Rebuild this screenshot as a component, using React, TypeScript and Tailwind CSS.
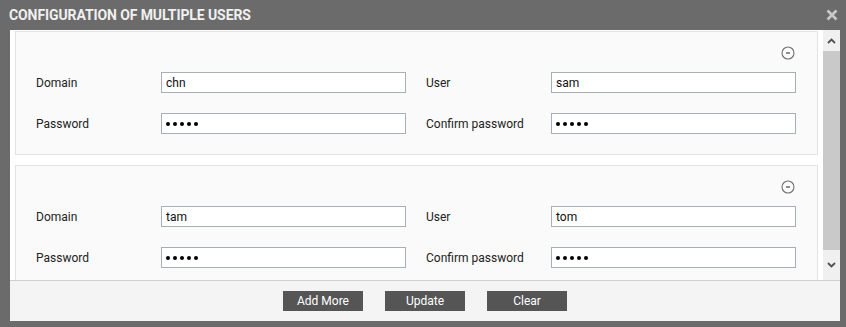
import React from "react";

function Dots() {
  return (
    <div className="flex items-center gap-[3px]">
      {[0, 1, 2, 3, 4].map((i) => (
        <span key={i} className="block w-[4px] h-[4px] rounded-full bg-black" />
      ))}
    </div>
  );
}

function Field({ value, password }: { value: string; password?: boolean }) {
  return (
    <div
      aria-label={password ? "password" : value}
      className="w-[245px] h-[21px] border border-[#a9adb8] bg-white flex items-center pl-[4px] text-[12px] text-[#111]"
    >
      {password ? <Dots /> : value}
    </div>
  );
}

function MinusIcon() {
  return (
    <svg width="14" height="14" viewBox="0 0 14 14">
      <circle cx="7" cy="7" r="6" fill="none" stroke="#707070" strokeWidth="1.1" />
      <line x1="5" y1="7" x2="9" y2="7" stroke="#555" strokeWidth="1.3" />
    </svg>
  );
}

function Panel({ domain, user }: { domain: string; user: string }) {
  return (
    <div className="shrink-0 h-[124px] border border-[#e2e2e2] bg-[#fafafa] pt-[14px]">
      <div className="flex justify-end pr-[22px] h-[14px]">
        <MinusIcon />
      </div>
      <div className="flex flex-col gap-[20px] pl-[20px] mt-[12px]">
        <div className="flex items-center">
          <div className="w-[125px] text-[12px] text-[#222]">Domain</div>
          <Field value={domain} />
          <div className="w-[20px]" />
          <div className="w-[125px] text-[12px] text-[#222]">User</div>
          <Field value={user} />
        </div>
        <div className="flex items-center">
          <div className="w-[125px] text-[12px] text-[#222]">Password</div>
          <Field value="*****" password />
          <div className="w-[20px]" />
          <div className="w-[125px] text-[12px] text-[#222]">Confirm password</div>
          <Field value="*****" password />
        </div>
      </div>
    </div>
  );
}

export default function App() {
  return (
    <div
      className="w-[846px] h-[327px] bg-[#6b6b6b] flex flex-col overflow-hidden"
      style={{ fontFamily: "Roboto, 'Liberation Sans', sans-serif" }}
    >
      <div className="h-[30px] shrink-0 flex items-center justify-between pl-[9px] pr-[7px]">
        <div className="text-[14px] font-bold text-[#f0f0f0] tracking-[-0.1px]">
          CONFIGURATION OF MULTIPLE USERS
        </div>
        <svg width="12" height="12" viewBox="0 0 12 12" className="mr-[1px]">
          <path d="M1.5 1.5 L10.5 10.5 M10.5 1.5 L1.5 10.5" stroke="#c9c9c9" strokeWidth="2.6" />
        </svg>
      </div>
      <div className="ml-[10px] mr-[6px] mb-[6px] flex-1 flex flex-col bg-white">
        <div className="h-[250px] flex shrink-0">
          <div className="flex-1 overflow-hidden flex flex-col gap-[10px] px-[5px] pt-[1px]">
            <Panel domain="chn" user="sam" />
            <Panel domain="tam" user="tom" />
          </div>
          <div className="w-[17px] bg-[#f0f0f0] flex flex-col">
            <div className="h-[21px] flex items-center justify-center">
              <svg width="9" height="6" viewBox="0 0 9 6">
                <path d="M1 5 L4.5 1.5 L8 5" fill="none" stroke="#505050" strokeWidth="1.8" />
              </svg>
            </div>
            <div className="h-[199px] bg-[#c9c9c9]" />
            <div className="flex-1 flex items-center justify-center">
              <svg width="9" height="6" viewBox="0 0 9 6">
                <path d="M1 1 L4.5 4.5 L8 1" fill="none" stroke="#505050" strokeWidth="1.8" />
              </svg>
            </div>
          </div>
        </div>
        <div className="flex-1 border-t border-[#cfcfcf] bg-[#f4f4f4] flex items-center justify-center gap-[22px]">
          <button className="w-[80px] h-[20px] bg-[#555555] text-white text-[12px]">Add More</button>
          <button className="w-[80px] h-[20px] bg-[#555555] text-white text-[12px]">Update</button>
          <button className="w-[80px] h-[20px] bg-[#555555] text-white text-[12px]">Clear</button>
        </div>
      </div>
    </div>
  );
}
